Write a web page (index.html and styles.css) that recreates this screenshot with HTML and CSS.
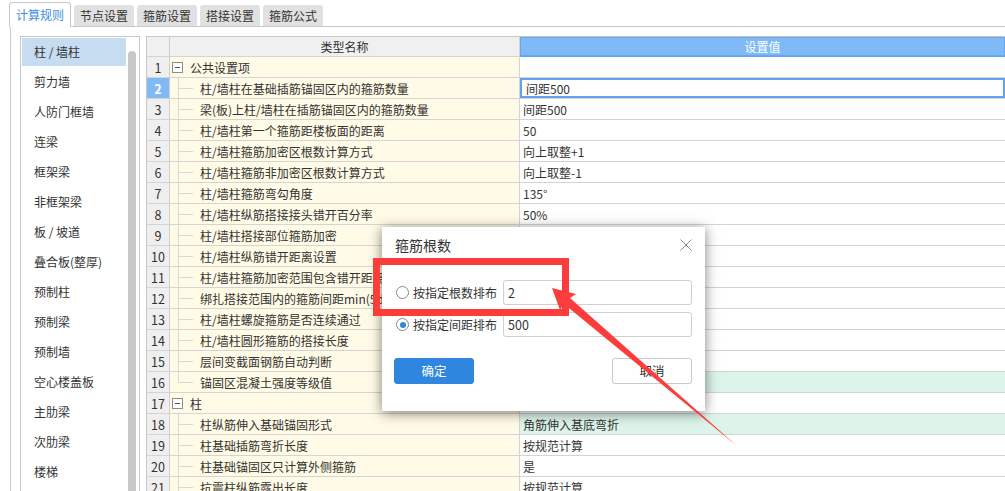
FILE: index.html
```html
<!DOCTYPE html>
<html lang="zh-CN">
<head>
<meta charset="utf-8">
<title>计算规则</title>
<link rel="stylesheet" href="styles.css">
</head>
<body>
<div class="tabs">
  <div class="tab active">计算规则</div>
  <div class="tab">节点设置</div>
  <div class="tab">箍筋设置</div>
  <div class="tab">搭接设置</div>
  <div class="tab">箍筋公式</div>
</div>
<div class="frame">
  <div class="sidebar">
    <ul class="list">
      <li class="sel">柱 / 墙柱</li>
      <li>剪力墙</li>
      <li>人防门框墙</li>
      <li>连梁</li>
      <li>框架梁</li>
      <li>非框架梁</li>
      <li>板 / 坡道</li>
      <li>叠合板(整厚)</li>
      <li>预制柱</li>
      <li>预制梁</li>
      <li>预制墙</li>
      <li>空心楼盖板</li>
      <li>主肋梁</li>
      <li>次肋梁</li>
      <li>楼梯</li>
    </ul>
    <div class="scroll"><div class="thumb"></div></div>
  </div>
  <div class="grid">
    <div class="row head"><div class="num"></div><div class="name">类型名称</div><div class="val">设置值</div></div>
    <div class="row"><div class="num">1</div><div class="name"><span class="toggle"></span><span class="gtext">公共设置项</span></div><div class="val"></div></div>
    <div class="row cur"><div class="num">2</div><div class="name"><span class="tree"></span>柱/墙柱在基础插筋锚固区内的箍筋数量</div><div class="val">间距500</div></div>
    <div class="row"><div class="num">3</div><div class="name"><span class="tree"></span>梁(板)上柱/墙柱在插筋锚固区内的箍筋数量</div><div class="val">间距500</div></div>
    <div class="row"><div class="num">4</div><div class="name"><span class="tree"></span>柱/墙柱第一个箍筋距楼板面的距离</div><div class="val">50</div></div>
    <div class="row"><div class="num">5</div><div class="name"><span class="tree"></span>柱/墙柱箍筋加密区根数计算方式</div><div class="val">向上取整+1</div></div>
    <div class="row"><div class="num">6</div><div class="name"><span class="tree"></span>柱/墙柱箍筋非加密区根数计算方式</div><div class="val">向上取整-1</div></div>
    <div class="row"><div class="num">7</div><div class="name"><span class="tree"></span>柱/墙柱箍筋弯勾角度</div><div class="val">135°</div></div>
    <div class="row"><div class="num">8</div><div class="name"><span class="tree"></span>柱/墙柱纵筋搭接接头错开百分率</div><div class="val">50%</div></div>
    <div class="row"><div class="num">9</div><div class="name"><span class="tree"></span>柱/墙柱搭接部位箍筋加密</div><div class="val"></div></div>
    <div class="row"><div class="num">10</div><div class="name"><span class="tree"></span>柱/墙柱纵筋错开距离设置</div><div class="val"></div></div>
    <div class="row"><div class="num">11</div><div class="name"><span class="tree"></span>柱/墙柱箍筋加密范围包含错开距离</div><div class="val"></div></div>
    <div class="row"><div class="num">12</div><div class="name"><span class="tree"></span>绑扎搭接范围内的箍筋间距min(5d,100)</div><div class="val"></div></div>
    <div class="row"><div class="num">13</div><div class="name"><span class="tree"></span>柱/墙柱螺旋箍筋是否连续通过</div><div class="val"></div></div>
    <div class="row"><div class="num">14</div><div class="name"><span class="tree"></span>柱/墙柱圆形箍筋的搭接长度</div><div class="val"></div></div>
    <div class="row"><div class="num">15</div><div class="name"><span class="tree"></span>层间变截面钢筋自动判断</div><div class="val"></div></div>
    <div class="row"><div class="num">16</div><div class="name"><span class="tree last"></span>锚固区混凝土强度等级值</div><div class="val green"></div></div>
    <div class="row"><div class="num">17</div><div class="name"><span class="toggle"></span><span class="gtext">柱</span></div><div class="val"></div></div>
    <div class="row"><div class="num">18</div><div class="name"><span class="tree"></span>柱纵筋伸入基础锚固形式</div><div class="val green">角筋伸入基底弯折</div></div>
    <div class="row"><div class="num">19</div><div class="name"><span class="tree"></span>柱基础插筋弯折长度</div><div class="val">按规范计算</div></div>
    <div class="row"><div class="num">20</div><div class="name"><span class="tree"></span>柱基础锚固区只计算外侧箍筋</div><div class="val">是</div></div>
    <div class="row"><div class="num">21</div><div class="name"><span class="tree"></span>抗震柱纵筋露出长度</div><div class="val">按规范计算</div></div>
  </div>
</div>

<div class="dialog">
  <div class="dlg-head">
    <span class="dlg-title">箍筋根数</span>
    <svg class="close" width="12" height="12" viewBox="0 0 12 12"><path d="M0.5 0.5 L11.5 11.5 M11.5 0.5 L0.5 11.5" stroke="#8a8a8a" stroke-width="1" fill="none"/></svg>
  </div>
  <div class="dlg-body">
    <div class="opt"><span class="radio"></span><span class="lbl">按指定根数排布</span><div class="input">2</div></div>
    <div class="opt"><span class="radio on"></span><span class="lbl">按指定间距排布</span><div class="input">500</div></div>
  </div>
  <div class="dlg-foot">
    <div class="btn primary">确定</div>
    <div class="btn">取消</div>
  </div>
</div>

<svg class="annot" width="1005" height="491" viewBox="0 0 1005 491">
  <rect x="376.5" y="261.5" width="189" height="51" fill="none" stroke="#fd3c3c" stroke-width="7"/>
  <polygon points="552,288 576,294 570,298 737,446 564,304 560,310" fill="#fd3c3c"/>
</svg>
</body>
</html>
```
FILE: styles.css
```css
html, body {
  margin: 0;
  padding: 0;
}
body {
  width: 1005px;
  height: 491px;
  overflow: hidden;
  position: relative;
  background: #fff;
  color: #333;
  font-family: "Noto Sans CJK SC", "Microsoft YaHei", "Noto Sans", sans-serif;
  font-size: 12px;
}

/* tabs */
.tabs {
  display: flex;
  align-items: flex-end;
  gap: 3px;
  height: 26px;
  margin-left: 10px;
  border-bottom: 1px solid #c8c8c8;
}
.tab {
  box-sizing: border-box;
  width: 60px;
  height: 21px;
  background: #e1e1e1;
  border-radius: 3px 3px 0 0;
  text-align: center;
  line-height: 21px;
  color: #333;
}
.tab.active {
  width: 62px;
  height: 25px;
  margin-bottom: -1px;
  background: #fff;
  border: 1px solid #c8c8c8;
  border-bottom: none;
  color: #3a8ee6;
  line-height: 23px;
  margin-left: -1px;
}

/* frame */
.frame {
  display: flex;
  margin-left: 10px;
  border-left: 1px solid #c8c8c8;
  padding: 9px 0 0 9px;
  height: 464px;
  box-sizing: border-box;
  overflow: hidden;
}
.sidebar {
  flex: none;
  box-sizing: border-box;
  width: 120px;
  height: 480px;
  border: 1px solid #c8c8c8;
  padding: 1px;
  display: flex;
  margin-right: 6px;
}
.list {
  list-style: none;
  margin: 0;
  padding: 0;
  width: 104px;
}
.list li {
  height: 28px;
  line-height: 28px;
  margin-bottom: 2px;
  padding-left: 12px;
  white-space: nowrap;
}
.list li.sel {
  background: #c5dcf1;
}
.scroll {
  margin-left: 2px;
  width: 8px;
}
.thumb {
  margin-top: 13px;
  height: 460px;
  background: #c8c8c8;
  border-radius: 4px 4px 0 0;
}

/* grid */
.grid {
  flex: 1;
  border-top: 1px solid #c8c8c8;
  border-left: 1px solid #c8c8c8;
  min-width: 0;
}
.row {
  display: grid;
  grid-template-columns: 23px 350px 1fr;
  height: 21px;
}
.row > div {
  box-sizing: border-box;
  border-bottom: 1px solid #d4d4d4;
  display: flex;
  align-items: center;
  white-space: nowrap;
  overflow: hidden;
}
.num {
  background: #efefef;
  border-right: 1px solid #cfcfcf;
  justify-content: center;
  font-size: 12.5px;
}
.name {
  background: #fffbe6;
  border-right: 1px solid #d4d4d4;
}
.val {
  background: #fff;
  padding-left: 3px;
}
.val.green {
  background: #dcf4e9;
}
.row.head {
  height: 20px;
}
.row.head .num,
.row.head .name {
  background: #f0f0f0;
  justify-content: center;
}
.row.head .val {
  background: #7fbaf6;
  color: #fff;
  justify-content: center;
  padding-left: 0;
  box-shadow: inset 0 0 0 1px #66a8ee;
  border-bottom-color: #66a8ee;
}
.row.cur .num {
  background: #7fbaf6;
  color: #fff;
  font-weight: bold;
}
.row.cur .val {
  box-shadow: inset 0 0 0 2px #63a3ea;
  padding-left: 6px;
}
.toggle {
  flex: none;
  box-sizing: border-box;
  width: 11px;
  height: 11px;
  margin-left: 2px;
  border: 1px solid #8c8c8c;
  background: #fff;
  display: flex;
  align-items: center;
  justify-content: center;
}
.toggle::before {
  content: "";
  width: 5px;
  height: 1px;
  background: #555;
}
.gtext {
  margin-left: 7px;
}
.tree {
  flex: none;
  align-self: stretch;
  width: 22px;
  margin-left: 8px;
  background:
    linear-gradient(#d8d8d8, #d8d8d8) left top / 1px 100% no-repeat,
    linear-gradient(#d8d8d8, #d8d8d8) left center / 15px 1px no-repeat;
}
.tree.last {
  background:
    linear-gradient(#d8d8d8, #d8d8d8) left top / 1px 50% no-repeat,
    linear-gradient(#d8d8d8, #d8d8d8) left center / 15px 1px no-repeat;
}

/* dialog */
.dialog {
  position: absolute;
  left: 382px;
  top: 227px;
  width: 323px;
  height: 184px;
  box-sizing: border-box;
  background: #fff;
  padding: 0 13px 0 12px;
  box-shadow: 0 2px 12px rgba(0, 0, 0, 0.5);
}
.dlg-head {
  height: 36px;
  display: flex;
  align-items: center;
  justify-content: space-between;
}
.dlg-title {
  font-size: 14px;
  padding-left: 1px;
  color: #333;
}
.close {
  display: block;
}
.dlg-body {
  margin-top: 17px;
  display: flex;
  flex-direction: column;
  gap: 7px;
}
.opt {
  display: flex;
  align-items: center;
  height: 25px;
}
.radio {
  flex: none;
  box-sizing: border-box;
  width: 13px;
  height: 13px;
  margin-left: 2px;
  border: 1px solid #8a8a8a;
  border-radius: 50%;
  background: #fff;
  display: flex;
  align-items: center;
  justify-content: center;
}
.radio.on::before {
  content: "";
  width: 6px;
  height: 6px;
  border-radius: 50%;
  background: #2e86de;
}
.lbl {
  margin-left: 4px;
  font-size: 12px;
}
.input {
  margin-left: auto;
  box-sizing: border-box;
  width: 189px;
  height: 25px;
  border: 1px solid #cfcfcf;
  border-radius: 3px;
  padding-left: 4px;
  line-height: 23px;
  font-size: 12.5px;
}
.dlg-foot {
  margin-top: 21px;
  display: flex;
  justify-content: space-between;
}
.btn {
  box-sizing: border-box;
  width: 80px;
  height: 26px;
  border-radius: 3px;
  border: 1px solid #c8c8c8;
  background: #fff;
  text-align: center;
  line-height: 24px;
  font-size: 12.5px;
  color: #333;
}
.btn.primary {
  background: #2e86de;
  border-color: #2e86de;
  color: #fff;
}

/* annotation overlay */
.annot {
  position: absolute;
  left: 0;
  top: 0;
  pointer-events: none;
}
```
